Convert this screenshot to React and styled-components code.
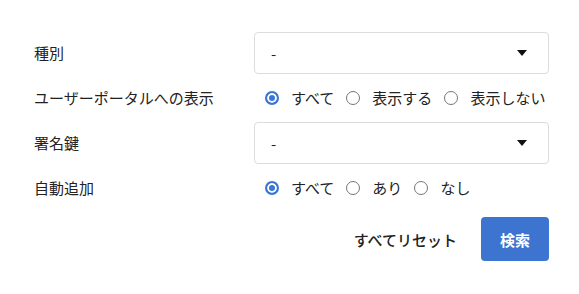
import React, { useState } from 'react';
import styled, { createGlobalStyle } from 'styled-components';

const GlobalStyle = createGlobalStyle`
  html, body {
    margin: 0;
    background: #fff;
  }
  body {
    font-family: "Noto Sans CJK JP", "Noto Sans", sans-serif;
    color: #222;
  }
`;

const Form = styled.form`
  padding: 32px 30px 0 34px;
  display: flex;
  flex-direction: column;
  gap: 14px;
`;

const Row = styled.div`
  display: grid;
  grid-template-columns: 220px 1fr;
  align-items: center;
  height: ${p => (p.$select ? '42px' : '20px')};
`;

const Label = styled.div`
  font-size: 15px;
  line-height: 20px;
`;

const SelectBox = styled.div`
  box-sizing: border-box;
  height: 42px;
  border: 1px solid #dcdcdc;
  border-radius: 4px;
  display: flex;
  align-items: center;
  justify-content: space-between;
  padding: 0 21px 0 16px;
  font-size: 15px;
  cursor: pointer;
`;

const Caret = styled.span`
  width: 0;
  height: 0;
  border-left: 5px solid transparent;
  border-right: 5px solid transparent;
  border-top: 6px solid #111;
`;

const RadioGroup = styled.div`
  display: flex;
  align-items: center;
  gap: 12px;
  padding-left: 11px;
`;

const Option = styled.label`
  display: flex;
  align-items: center;
  gap: 12px;
  font-size: 15px;
  line-height: 20px;
  cursor: pointer;
`;

const Radio = styled.input.attrs({ type: 'radio' })`
  appearance: none;
  margin: 0;
  box-sizing: border-box;
  width: 14px;
  height: 14px;
  border-radius: 50%;
  border: 1px solid #767676;
  background: #fff;

  &:checked {
    border: 2px solid #3b76d6;
    background: #3b76d6;
    box-shadow: inset 0 0 0 2px #fff;
  }
`;

const Actions = styled.div`
  display: flex;
  justify-content: flex-end;
  align-items: center;
  gap: 24px;
  margin-top: 5px;
`;

const ResetButton = styled.button`
  border: none;
  background: none;
  padding: 0;
  font-family: inherit;
  font-size: 15px;
  font-weight: 500;
  color: #222;
  cursor: pointer;
`;

const SearchButton = styled.button`
  width: 68px;
  height: 44px;
  border: none;
  border-radius: 4px;
  background: #3d74cf;
  color: #fff;
  font-family: inherit;
  font-size: 15px;
  font-weight: 700;
  cursor: pointer;
`;

const RadioRow = ({ label, name, options, value, onChange }) => (
  <Row>
    <Label>{label}</Label>
    <RadioGroup>
      {options.map(o => (
        <Option key={o}>
          <Radio name={name} checked={value === o} onChange={() => onChange(o)} />
          {o}
        </Option>
      ))}
    </RadioGroup>
  </Row>
);

const App = () => {
  const [portal, setPortal] = useState('すべて');
  const [auto, setAuto] = useState('すべて');

  return (
    <>
      <GlobalStyle />
      <Form onSubmit={e => e.preventDefault()}>
        <Row $select>
          <Label>種別</Label>
          <SelectBox>
            <span>-</span>
            <Caret />
          </SelectBox>
        </Row>
        <RadioRow
          label="ユーザーポータルへの表示"
          name="portal"
          options={['すべて', '表示する', '表示しない']}
          value={portal}
          onChange={setPortal}
        />
        <Row $select>
          <Label>署名鍵</Label>
          <SelectBox>
            <span>-</span>
            <Caret />
          </SelectBox>
        </Row>
        <RadioRow
          label="自動追加"
          name="auto"
          options={['すべて', 'あり', 'なし']}
          value={auto}
          onChange={setAuto}
        />
        <Actions>
          <ResetButton type="button" onClick={() => { setPortal('すべて'); setAuto('すべて'); }}>
            すべてリセット
          </ResetButton>
          <SearchButton type="submit">検索</SearchButton>
        </Actions>
      </Form>
    </>
  );
};

export default App;
